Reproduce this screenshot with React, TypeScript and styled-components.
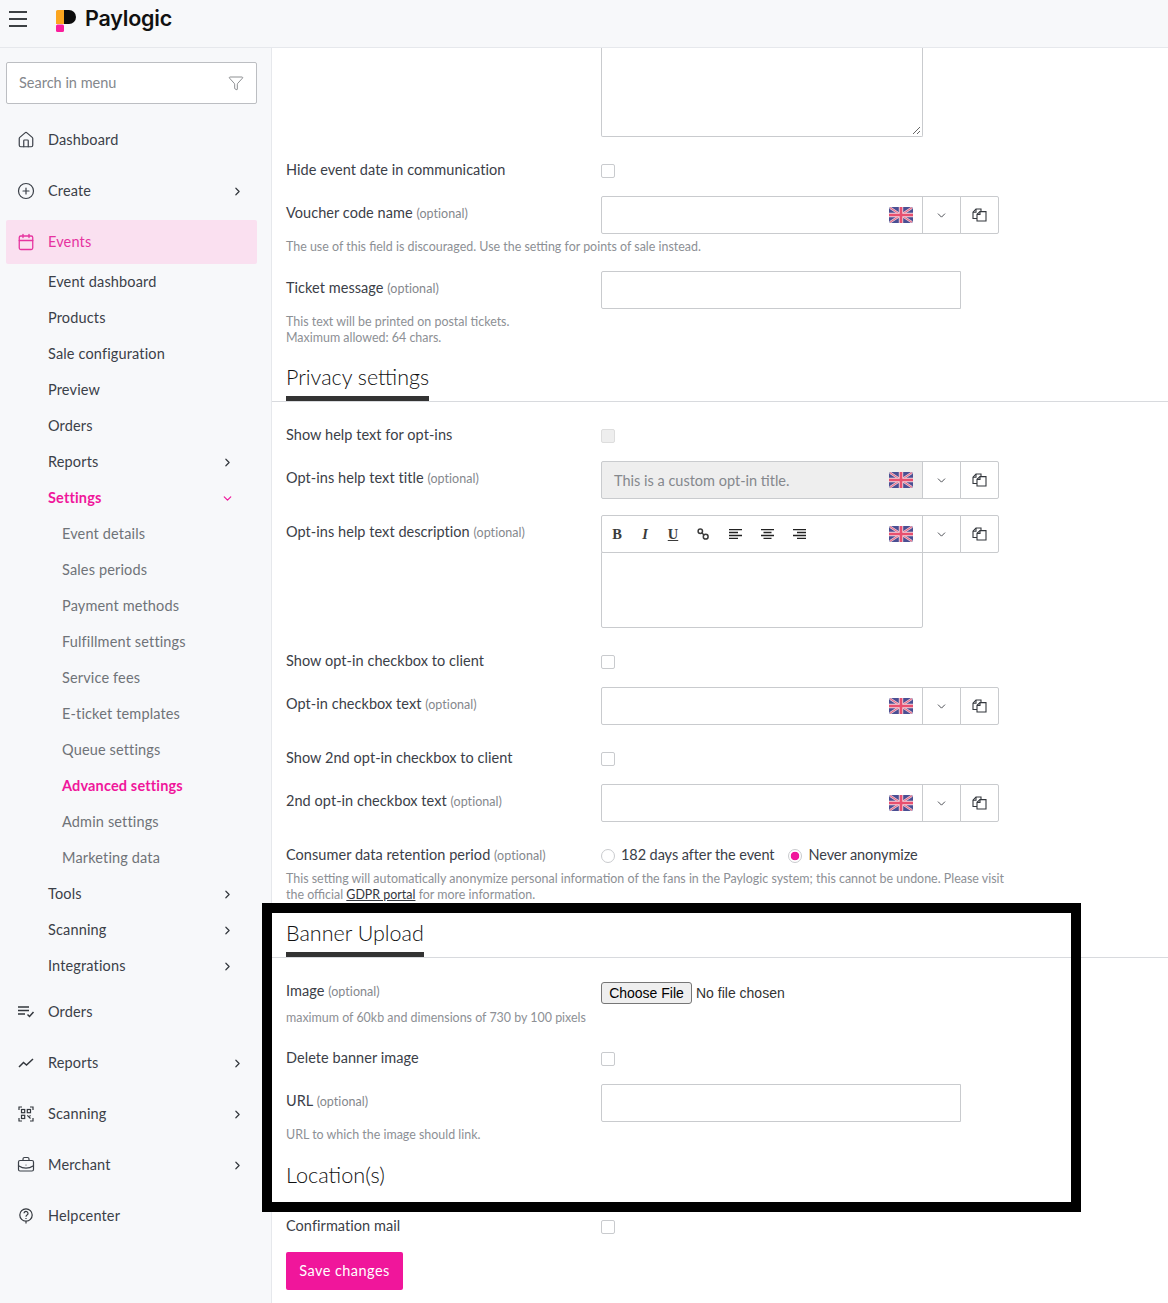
import React from "react";
import styled, { createGlobalStyle } from "styled-components";
import { ChevronRight, ChevronDown, Funnel, House, CirclePlus, Calendar, BriefcaseBusiness } from "lucide-react";

const GlobalStyle = createGlobalStyle`
  html, body {
    margin: 0;
    padding: 0;
    background: #fff;
  }
  body {
    font-family: "Lato", "Open Sans", Arial, sans-serif;
    font-size: 14.5px;
    color: #33373d;
    overflow: hidden;
  }
  * {
    box-sizing: border-box;
  }
`;

const Page = styled.div`
  position: relative;
  width: 1168px;
  height: 1303px;
  overflow: hidden;
  display: flex;
  flex-direction: column;
`;

const Header = styled.header`
  height: 48px;
  flex: none;
  display: flex;
  align-items: flex-start;
  background: #f7f8fa;
  border-bottom: 1px solid #e6e8ec;
  padding: 8px 0 0 9px;
`;

const Burger = styled.div`
  width: 18px;
  height: 16px;
  margin-top: 3px;
  display: flex;
  flex-direction: column;
  justify-content: space-between;

  span {
    display: block;
    height: 2px;
    background: #3c4043;
  }
`;

const LogoWrap = styled.div`
  margin-left: 29px;
  margin-top: 2px;
  line-height: 0;
`;

const Brand = styled.span`
  margin-left: 7px;
  font-family: "Inter", sans-serif;
  font-size: 21.5px;
  line-height: 21px;
  font-weight: 600;
  letter-spacing: -0.2px;
  color: #111;
`;

const Body = styled.div`
  flex: 1;
  display: flex;
  min-height: 0;
`;

const Sidebar = styled.aside`
  width: 272px;
  flex: none;
  background: #f7f8fa;
  border-right: 1px solid #e6e8ec;
  padding: 14px 14px 0 6px;
  letter-spacing: 0.15px;
`;

const SearchBox = styled.div`
  width: 251px;
  height: 42px;
  background: #fff;
  border: 1px solid #bcbec2;
  border-radius: 2px;
  display: flex;
  align-items: center;
  justify-content: space-between;
  padding: 0 12px 2px;
  color: #84878c;
  margin-bottom: 14px;
  letter-spacing: 0;

  svg {
    margin-top: 2px;
  }
`;

const TopItem = styled.div<{ $active?: boolean }>`
  width: 251px;
  height: 44px;
  margin-bottom: 7px;
  display: flex;
  align-items: center;
  padding: 0 13px 2px 12px;
  border-radius: 2px;
  background: ${(p) => (p.$active ? "#fae0f0" : "transparent")};
  color: ${(p) => (p.$active ? "#e6339f" : "#3b4048")};
`;

const IconSlot = styled.span`
  width: 16px;
  height: 16px;
  margin-top: 2px;
  margin-right: 14px;
  display: flex;
  align-items: center;
  justify-content: center;
  flex: none;

  svg {
    flex: none;
  }
`;

const Arrow = styled.span`
  margin-left: auto;
  margin-top: 2px;
  display: flex;
  color: #33373d;
`;

const SubList = styled.div`
  display: flex;
  flex-direction: column;
  margin-top: -7px;
  margin-bottom: 6px;
`;

const SubItem = styled.div<{ $level?: number; $active?: boolean }>`
  width: 251px;
  height: 36px;
  display: flex;
  align-items: center;
  padding-left: ${(p) => (p.$level === 2 ? 56 : 42)}px;
  padding-right: 23px;
  padding-bottom: 2px;
  color: ${(p) => (p.$active ? "#f0169b" : p.$level === 2 ? "#6f7378" : "#3b4048")};
  font-weight: ${(p) => (p.$active ? 700 : 400)};
`;

const Main = styled.main`
  flex: 1;
  display: flex;
  flex-direction: column;
  min-width: 0;
`;

const Sect = styled.div<{ $mt?: number }>`
  padding-left: 14px;
  margin-top: ${(p) => p.$mt ?? 0}px;
`;

const TextArea = styled.div`
  position: relative;
  width: 322px;
  height: 89px;
  margin-left: 315px;
  border: 1px solid #c9cbce;
  border-top: none;
  border-radius: 0 0 2px 2px;
`;

const Grip = styled.svg`
  position: absolute;
  right: 1px;
  bottom: 1px;
`;

const Row = styled.div<{ $mt?: number; $h?: number }>`
  display: flex;
  align-items: center;
  min-height: ${(p) => p.$h ?? 20}px;
  margin-top: ${(p) => p.$mt ?? 0}px;
`;

const TopRow = styled(Row)`
  align-items: flex-start;
`;

const Label = styled.label<{ $offset?: number; $raise?: number }>`
  width: 315px;
  flex: none;
  line-height: 20px;
  color: #3b4048;
  letter-spacing: 0.05px;
  padding-top: ${(p) => p.$offset ?? 0}px;
  margin-top: ${(p) => -(p.$raise ?? 0)}px;

  small {
    font-size: 12.5px;
    color: #85888d;
  }
`;

const Check = styled.input.attrs({ type: "checkbox" })`
  appearance: none;
  width: 14px;
  height: 14px;
  margin: 2px 0 0;
  background: #fff;
  border: 1px solid #c9cbce;
  border-radius: 2px;

  &:disabled {
    background: #eee;
    border-color: #ddd;
  }
`;

const Group = styled.div`
  display: flex;
  height: 38px;
`;

const Field = styled.div<{ $disabled?: boolean; $w?: number }>`
  width: ${(p) => p.$w ?? 322}px;
  height: 38px;
  display: flex;
  align-items: center;
  justify-content: space-between;
  padding: 0 9px 0 12px;
  border: 1px solid #c9cbce;
  border-radius: 2px 0 0 2px;
  background: ${(p) => (p.$disabled ? "#eee" : "#fff")};
  color: #85888d;
`;

const GroupButton = styled.div`
  width: 39px;
  height: 38px;
  margin-left: -1px;
  flex: none;
  display: flex;
  align-items: center;
  justify-content: center;
  background: #fff;
  border: 1px solid #c9cbce;
  color: #33373d;

  &:last-child {
    border-radius: 0 2px 2px 0;
  }
`;

const Help = styled.div<{ $mt?: number }>`
  margin-top: ${(p) => p.$mt ?? 5}px;
  font-size: 12.45px;
  line-height: 16px;
  color: #8d9095;

  a {
    color: #33373d;
    text-decoration: underline;
  }
`;

const SectionHead = styled.div<{ $mt?: number }>`
  margin-top: ${(p) => p.$mt ?? 14}px;
  border-bottom: 1px solid #d8dade;
  height: 42px;
  padding-left: 14px;
`;

const SectionTitle = styled.h2`
  display: inline-block;
  margin: 0;
  height: 41px;
  border-bottom: 5px solid #333;
  font-size: 21.5px;
  line-height: 34px;
  font-weight: 300;
  color: #111;
`;

const PlainTitle = styled.h2<{ $mt?: number }>`
  margin: ${(p) => p.$mt ?? 14}px 0 0;
  font-size: 21.7px;
  line-height: 36px;
  font-weight: 300;
  color: #111;
`;

const Toolbar = styled.div`
  display: flex;
  align-items: center;
  margin-left: -11px;
`;

const Tool = styled.span<{ $italic?: boolean; $underline?: boolean; $wide?: boolean }>`
  width: ${(p) => (p.$wide ? 32 : 28)}px;
  height: 20px;
  display: flex;
  align-items: center;
  justify-content: center;
  font-family: "Liberation Serif", serif;
  font-weight: 700;
  font-size: 14.5px;
  color: #3b3b3b;
  font-style: ${(p) => (p.$italic ? "italic" : "normal")};
  text-decoration: ${(p) => (p.$underline ? "underline" : "none")};
`;

const EditorBody = styled.div`
  width: 322px;
  height: 76px;
  margin-top: -1px;
  border: 1px solid #c9cbce;
  border-radius: 0 0 2px 2px;
`;

const RadioGroup = styled.div`
  display: flex;
  align-items: center;
`;

const Radio = styled.input.attrs({ type: "radio" })`
  appearance: none;
  width: 14px;
  height: 14px;
  margin: 0 6px 0 0;
  background: #fff;
  border: 1px solid #c9cbce;
  border-radius: 50%;

  &:checked {
    border-color: #c9cbce;
    background: radial-gradient(circle, #f0169b 0 4px, #fff 4.6px);
  }
`;

const RadioLabel = styled.span`
  margin-right: 14px;
  padding-bottom: 2px;
  letter-spacing: -0.08px;
  color: #3b4048;
`;

const FileInput = styled.input.attrs({ type: "file" })`
  font-family: "Liberation Sans", Arial, sans-serif;
  font-size: 14px;
  color: #333;
  height: 22px;

  &::file-selector-button {
    font: inherit;
    width: 91px;
    height: 22px;
    margin-right: 4px;
    padding: 0;
    background: #efefef;
    border: 1px solid #767676;
    border-radius: 3px;
    color: #000;
  }
`;

const SaveButton = styled.button`
  width: 117px;
  height: 38px;
  margin-top: 16px;
  padding: 0 0 2px;
  border: none;
  border-radius: 2px;
  background: #f0169b;
  color: #fff;
  font: inherit;
  letter-spacing: 0.45px;
`;

const Annotation = styled.div`
  position: absolute;
  left: 262px;
  top: 903px;
  width: 819px;
  height: 309px;
  border: 10px solid #000;
  pointer-events: none;
`;

const Logo = () => (
  <svg width="22" height="22" viewBox="0 0 22 22">
    <path d="M8 0h5a7 7 0 0 1 0 14H8z" fill="#0c0c0c" />
    <path d="M1.5 0H10v14H0V1.5A1.5 1.5 0 0 1 1.5 0z" fill="#fba51f" />
    <path d="M8 0h2v14H8z" fill="#0c0c0c" />
    <rect x="0" y="14.5" width="8" height="7.5" rx="1.5" fill="#fa1e9c" />
  </svg>
);

const ChevR = () => <ChevronRight size={13} strokeWidth={2.2} />;

const OrdersIcon = () => (
  <svg width="17" height="12" viewBox="0 0 17 12" fill="none" stroke="#33373d" strokeWidth="1.5">
    <path d="M0 1h11M0 4.5h11M0 8h7M9.5 8.5l2 2 4-4.5" />
  </svg>
);

const ReportsIcon = () => (
  <svg width="16" height="10" viewBox="0 0 16 10" fill="none" stroke="#33373d" strokeWidth="1.5">
    <path d="M1 9l4.5-4.5 3 2.5L15 1" />
  </svg>
);

const ScanIcon = () => (
  <svg width="16" height="16" viewBox="0 0 16 16" fill="none" stroke="#33373d" strokeWidth="1.2">
    <path d="M1 4V1h3M12 1h3v3M1 12v3h3M15 12v3h-3" />
    <rect x="3.5" y="3.5" width="3.2" height="3.2" />
    <rect x="9.3" y="3.5" width="3.2" height="3.2" />
    <rect x="3.5" y="9.3" width="3.2" height="3.2" />
    <path d="M9.3 9.3l3.2 3.2M12.5 9.3l-1 1" />
  </svg>
);

const HelpIcon = () => (
  <svg width="14" height="16" viewBox="0 0 14 16" fill="none" stroke="#33373d" strokeWidth="1.2">
    <path d="M7 13.2A6.2 6.2 0 1 1 7 .8a6.2 6.2 0 0 1 0 12.4zM7 13.2V15.5" />
    <path d="M5 5.3a2 2 0 1 1 3 1.8c-.7.4-1 .8-1 1.6M7 10v.9" />
  </svg>
);

const CopyIcon = () => (
  <svg width="15" height="14" viewBox="0 0 15 14" fill="none" stroke="#33373d" strokeWidth="1.1">
    <path d="M5 10.5H1V4.2L4 1h5v2.5" />
    <path d="M5 13V6.2L8 3.6h6V13z" />
    <path d="M4 1v3.2H1M8 3.6v2.8H5" />
  </svg>
);

const LinkIcon = () => (
  <svg width="12" height="12" viewBox="0 0 12 12" fill="none" stroke="#3b3b3b" strokeWidth="1.5">
    <circle cx="3.3" cy="3.3" r="2.2" />
    <circle cx="8.7" cy="8.7" r="2.4" />
    <path d="M5 5l2 2" />
  </svg>
);

const AlignIcon = ({ kind }: { kind: "left" | "center" | "right" }) => {
  const short =
    kind === "left" ? "M0 3.5h9M0 9.5h9" : kind === "center" ? "M2.5 3.5h8M2.5 9.5h8" : "M4 3.5h9M4 9.5h9";
  return (
    <svg width="13" height="10" viewBox="0 0 13 10" fill="none" stroke="#222" strokeWidth="1.3">
      <path d="M0 .6h13M0 6.5h13" />
      <path d={short} />
    </svg>
  );
};

const Flag = () => (
  <svg width="24" height="16" viewBox="0 0 24 16">
    <g>
      <rect width="24" height="16" rx="2" fill="#4a4f93" />
      <path d="M1 .7l22 14.6M23 .7L1 15.3" stroke="#e9c9d6" strokeWidth="2.4" />
      <path d="M1 .7l22 14.6M23 .7L1 15.3" stroke="#e8506f" strokeWidth="0.9" />
      <path d="M12 0v16M0 8h24" stroke="#efd6df" strokeWidth="4.4" />
      <path d="M12 0v16M0 8h24" stroke="#e8506f" strokeWidth="2.6" />
    </g>
  </svg>
);

const GroupEnd = () => (
  <>
    <GroupButton>
      <ChevronDown size={13} strokeWidth={1.6} />
    </GroupButton>
    <GroupButton>
      <CopyIcon />
    </GroupButton>
  </>
);

const LangInput = ({ text, disabled }: { text?: string; disabled?: boolean }) => (
  <Group>
    <Field $disabled={disabled}>
      <span>{text}</span>
      <Flag />
    </Field>
    <GroupEnd />
  </Group>
);

const settings = [
  { name: "Event details" },
  { name: "Sales periods" },
  { name: "Payment methods" },
  { name: "Fulfillment settings" },
  { name: "Service fees" },
  { name: "E-ticket templates" },
  { name: "Queue settings" },
  { name: "Advanced settings", active: true },
  { name: "Admin settings" },
  { name: "Marketing data" },
];

export default function App() {
  return (
    <Page>
      <GlobalStyle />
      <Header>
        <Burger>
          <span />
          <span />
          <span />
        </Burger>
        <LogoWrap>
          <Logo />
        </LogoWrap>
        <Brand>Paylogic</Brand>
      </Header>
      <Body>
        <Sidebar>
          <SearchBox>
            Search in menu
            <Funnel size={16} strokeWidth={1} color="#55585c" />
          </SearchBox>
          <TopItem>
            <IconSlot>
              <House size={18} strokeWidth={1.6} />
            </IconSlot>
            Dashboard
          </TopItem>
          <TopItem>
            <IconSlot>
              <CirclePlus size={18} strokeWidth={1.6} />
            </IconSlot>
            Create
            <Arrow>
              <ChevR />
            </Arrow>
          </TopItem>
          <TopItem $active>
            <IconSlot>
              <Calendar size={18} strokeWidth={1.7} />
            </IconSlot>
            Events
          </TopItem>
          <SubList>
            <SubItem>Event dashboard</SubItem>
            <SubItem>Products</SubItem>
            <SubItem>Sale configuration</SubItem>
            <SubItem>Preview</SubItem>
            <SubItem>Orders</SubItem>
            <SubItem>
              Reports
              <Arrow>
                <ChevR />
              </Arrow>
            </SubItem>
            <SubItem $active>
              Settings
              <Arrow>
                <ChevronDown size={13} strokeWidth={2.2} color="#f0169b" />
              </Arrow>
            </SubItem>
            {settings.map((s) => (
              <SubItem key={s.name} $level={2} $active={s.active}>
                {s.name}
              </SubItem>
            ))}
            <SubItem>
              Tools
              <Arrow>
                <ChevR />
              </Arrow>
            </SubItem>
            <SubItem>
              Scanning
              <Arrow>
                <ChevR />
              </Arrow>
            </SubItem>
            <SubItem>
              Integrations
              <Arrow>
                <ChevR />
              </Arrow>
            </SubItem>
          </SubList>
          <TopItem>
            <IconSlot>
              <OrdersIcon />
            </IconSlot>
            Orders
          </TopItem>
          <TopItem>
            <IconSlot>
              <ReportsIcon />
            </IconSlot>
            Reports
            <Arrow>
              <ChevR />
            </Arrow>
          </TopItem>
          <TopItem>
            <IconSlot>
              <ScanIcon />
            </IconSlot>
            Scanning
            <Arrow>
              <ChevR />
            </Arrow>
          </TopItem>
          <TopItem>
            <IconSlot>
              <BriefcaseBusiness size={18} strokeWidth={1.6} />
            </IconSlot>
            Merchant
            <Arrow>
              <ChevR />
            </Arrow>
          </TopItem>
          <TopItem>
            <IconSlot>
              <HelpIcon />
            </IconSlot>
            Helpcenter
          </TopItem>
        </Sidebar>
        <Main>
          <Sect>
            <TextArea>
              <Grip width="9" height="9" viewBox="0 0 9 9" fill="none" stroke="#666" strokeWidth="1">
                <path d="M1 8l7-7M5 8l3-3" />
              </Grip>
            </TextArea>
            <Row $mt={23}>
              <Label>Hide event date in communication</Label>
              <Check />
            </Row>
            <TopRow $mt={16}>
              <Label $offset={7}>
                Voucher code name <small>(optional)</small>
              </Label>
              <LangInput />
            </TopRow>
            <Help>The use of this field is discouraged. Use the setting for points of sale instead.</Help>
            <TopRow $mt={16}>
              <Label $offset={7}>
                Ticket message <small>(optional)</small>
              </Label>
              <Field $w={360} />
            </TopRow>
            <Help>
              This text will be printed on postal tickets.
              <br />
              Maximum allowed: 64 chars.
            </Help>
          </Sect>
          <SectionHead>
            <SectionTitle>Privacy settings</SectionTitle>
          </SectionHead>
          <Sect $mt={23}>
            <Row>
              <Label>Show help text for opt-ins</Label>
              <Check disabled />
            </Row>
            <TopRow $mt={16}>
              <Label $offset={7}>
                Opt-ins help text title <small>(optional)</small>
              </Label>
              <LangInput text="This is a custom opt-in title." disabled />
            </TopRow>
            <TopRow $mt={16}>
              <Label $offset={7}>
                Opt-ins help text description <small>(optional)</small>
              </Label>
              <div>
                <Group>
                  <Field>
                    <Toolbar>
                      <Tool>B</Tool>
                      <Tool $italic>I</Tool>
                      <Tool $underline>U</Tool>
                      <Tool $wide>
                        <LinkIcon />
                      </Tool>
                      <Tool $wide>
                        <AlignIcon kind="left" />
                      </Tool>
                      <Tool $wide>
                        <AlignIcon kind="center" />
                      </Tool>
                      <Tool $wide>
                        <AlignIcon kind="right" />
                      </Tool>
                    </Toolbar>
                    <Flag />
                  </Field>
                  <GroupEnd />
                </Group>
                <EditorBody />
              </div>
            </TopRow>
            <Row $mt={23}>
              <Label>Show opt-in checkbox to client</Label>
              <Check />
            </Row>
            <TopRow $mt={16}>
              <Label $offset={7}>
                Opt-in checkbox text <small>(optional)</small>
              </Label>
              <LangInput />
            </TopRow>
            <Row $mt={23}>
              <Label>Show 2nd opt-in checkbox to client</Label>
              <Check />
            </Row>
            <TopRow $mt={16}>
              <Label $offset={7}>
                2nd opt-in checkbox text <small>(optional)</small>
              </Label>
              <LangInput />
            </TopRow>
            <Row $mt={23}>
              <Label>
                Consumer data retention period <small>(optional)</small>
              </Label>
              <RadioGroup>
                <Radio name="retention" />
                <RadioLabel>182 days after the event</RadioLabel>
                <Radio name="retention" defaultChecked />
                <RadioLabel>Never anonymize</RadioLabel>
              </RadioGroup>
            </Row>
            <Help $mt={5}>
              This setting will automatically anonymize personal information of the fans in the Paylogic system; this
              cannot be undone. Please visit
              <br />
              the official <a>GDPR portal</a> for more information.
            </Help>
          </Sect>
          <SectionHead $mt={13}>
            <SectionTitle>Banner Upload</SectionTitle>
          </SectionHead>
          <Sect $mt={24}>
            <TopRow $h={22}>
              <Label $raise={1}>
                Image <small>(optional)</small>
              </Label>
              <FileInput />
            </TopRow>
            <Help $mt={6}>maximum of 60kb and dimensions of 730 by 100 pixels</Help>
            <Row $mt={22}>
              <Label>Delete banner image</Label>
              <Check />
            </Row>
            <TopRow $mt={16}>
              <Label $offset={7}>
                URL <small>(optional)</small>
              </Label>
              <Field $w={360} />
            </TopRow>
            <Help>URL to which the image should link.</Help>
            <PlainTitle>Location(s)</PlainTitle>
            <Row $mt={23}>
              <Label>Confirmation mail</Label>
              <Check />
            </Row>
            <SaveButton>Save changes</SaveButton>
          </Sect>
        </Main>
      </Body>
      <Annotation />
    </Page>
  );
}
